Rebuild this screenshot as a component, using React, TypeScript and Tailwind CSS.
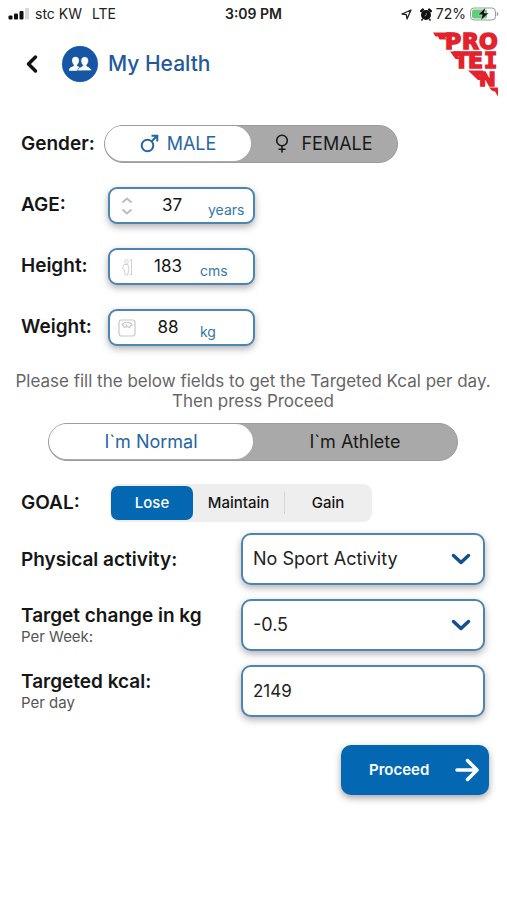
import React, { useState } from "react";

const fieldBox =
  "border-2 border-[#4a86b0] bg-white shadow-[0_3px_7px_rgba(60,50,60,0.38)]";

function StatusBar() {
  return (
    <div className="grid h-7 grid-cols-[1fr_auto_1fr] items-center pr-2 pl-2 text-[#222]">
      <div className="flex items-center">
        <svg width="21" height="12" viewBox="0 0 21 12" className="mr-1.5" aria-hidden="true">
          <rect x="0.5" y="7.5" width="4" height="4" rx="1" fill="#111" />
          <rect x="6" y="5.5" width="4" height="6" rx="1" fill="#111" />
          <rect x="11.500" y="3" width="4" height="8.500" rx="1" fill="#111" />
          <rect x="17" y="0" width="4" height="11.500" rx="1" fill="#d8d8d8" />
        </svg>
        <span className="mr-2.5 text-sm">stc KW</span>
        <span className="text-sm">LTE</span>
      </div>
      <div className="text-sm font-semibold">3:09 PM</div>
      <div className="flex items-center justify-end">
        <svg width="11" height="11" viewBox="0 0 11 11" className="mr-2" aria-hidden="true">
          <path d="M10 1 L1 5 L5.300 5.700 L6 10 Z" fill="none" stroke="#222" strokeWidth="1.300" strokeLinejoin="round" />
        </svg>
        <svg width="12" height="13" viewBox="0 0 12 13" className="mr-1" aria-hidden="true">
          <circle cx="6" cy="7" r="5" fill="#111" />
          <path d="M1.200 3.200 L2.800 1.600 M10.800 3.200 L9.200 1.600" stroke="#111" strokeWidth="2.400" strokeLinecap="round" />
          <path d="M2.600 11 L1.500 12.500 M9.400 11 L10.500 12.500" stroke="#111" strokeWidth="1.500" />
          <path d="M6.200 4.800 V7.200 L4.600 8" fill="none" stroke="#999" strokeWidth="0.800" />
        </svg>
        <span className="mr-1 text-sm">72%</span>
        <svg width="29" height="14" viewBox="0 0 29 14" aria-hidden="true">
          <rect x="0.500" y="1" width="25" height="12" rx="3.500" fill="#fff" stroke="#9a9a9a" />
          <rect x="2" y="2.500" width="15" height="9" rx="2" fill="#5fd07a" />
          <path d="M26.800 5 C28.800 5.500 28.800 8.500 26.800 9 Z" fill="#999" />
          <path d="M15.500 0.500 L8 7.800 H12.300 L10.700 13.500 L18.800 6 H14.200 Z" fill="#111" stroke="#fff" strokeWidth="0.400" />
        </svg>
      </div>
    </div>
  );
}

function PeopleIcon() {
  return (
    <svg width="36" height="36" viewBox="0 0 36 36" aria-hidden="true">
      <circle cx="18" cy="18" r="18" fill="#1557a5" />
      <g fill="#fff">
        <path d="M7 24.800 C7 22 8.500 21.400 11.300 20.300 C12 20 12.100 19.200 11.600 18.600 C10.500 17.300 10 15.800 10 14.300 C10 11.900 11.500 10.700 13.500 10.700 C15.500 10.700 17 11.900 17 14.300 C17 15.900 16.500 17.400 15.400 18.600 C14.900 19.200 15 20 15.700 20.300 C18 21.200 19.500 22 19.500 24.800 Z" />
        <path d="M15.500 24.800 C16 22.200 17.300 21.500 20 20.400 C20.800 20.100 20.800 19.200 20.300 18.600 C19.200 17.400 18.900 15.900 18.900 14.500 C18.900 12 20.400 10.700 22.700 10.700 C25 10.700 26.500 12 26.500 14.500 C26.500 16 26.100 17.400 25 18.600 C24.500 19.200 24.500 20.100 25.300 20.400 C28 21.500 29.200 22.200 29.500 24.800 Z" stroke="#1557a5" strokeWidth="0.700" />
      </g>
    </svg>
  );
}

function BrandLogo() {
  return (
    <svg
      width="66"
      height="66"
      viewBox="0 0 66 66"
      className="absolute top-[31px] right-2 overflow-visible"
      role="img"
      aria-label="Protein"
    >
      <g fill="#e3222c">
        <path d="M0 1.500 H18 V6 H12 L13.500 8.500 H6.500 L5 5.500 H2.500 Z" />
        <path d="M17 20.500 H28 V25 H25 L26.500 28 H22.500 Z" />
        <path d="M35 39.500 H50 V44 H46.500 L50 49 H45 Z" />
        <path d="M56 56.500 H65 V65.500 L62 60.500 L59.500 60 Z" />
      </g>
      {/* one word, stepped over three rows */}
      <text
        x="12 29 46 21 35 51 46"
        y="18 18 18 37 37 37 55"
        fill="#e3222c"
        stroke="#e3222c"
        strokeWidth="1.500"
        fontSize="22"
        fontWeight="700"
        className="font-['DejaVu_Sans']"
      >
        PROTE<tspan className="font-['DejaVu_Sans_Mono']">I</tspan>
        <tspan fontSize="20">N</tspan>
      </text>
    </svg>
  );
}

function MaleIcon() {
  return (
    <svg width="19" height="19" viewBox="0 0 19 19" fill="none" stroke="currentColor" strokeWidth="2" aria-hidden="true">
      <circle cx="7.500" cy="11.500" r="5.800" />
      <path d="M11.700 7.300 L17 2 M11.500 1.700 H17.300 V7.500" />
    </svg>
  );
}

function FemaleIcon() {
  return (
    <svg width="14" height="19" viewBox="0 0 14 19" fill="none" stroke="currentColor" strokeWidth="1.600" aria-hidden="true">
      <circle cx="7" cy="6.500" r="5.300" />
      <path d="M7 11.800 V18.500 M3.500 15.300 H10.500" />
    </svg>
  );
}

function AgeIcon() {
  return (
    <svg width="14" height="20" viewBox="0 0 14 20" fill="none" stroke="#bdbdbd" strokeWidth="2" aria-hidden="true">
      <path d="M2.500 6.500 L7 2.500 L11.500 6.500 M2.500 13.500 L7 17.500 L11.500 13.500" />
    </svg>
  );
}

function HeightIcon() {
  return (
    <svg width="14" height="18" viewBox="0 0 14 18" fill="none" stroke="#d2d2d2" aria-hidden="true">
      <circle cx="6.500" cy="3.500" r="1.800" />
      <path d="M4 6.500 H8 L9 11 L7.500 17 H5 L4.500 12 L2.500 10.500 Z M11.500 1 V17 M9.500 2 H11.500 M9.500 16.500 H11.500" />
    </svg>
  );
}

function WeightIcon() {
  return (
    <svg width="18" height="18" viewBox="0 0 18 18" fill="none" stroke="#c8c8c8" strokeWidth="1.200" className="flex-none" aria-hidden="true">
      <rect x="1" y="1" width="16" height="16" rx="2.500" />
      <path d="M4 5.500 C6.500 2.500 11.500 2.500 14 5.500 L11.500 8.500 C10 7.500 8 7.500 6.500 8.500 Z M9 7.500 L8 5" />
    </svg>
  );
}

interface NumberFieldProps {
  id: string;
  label: string;
  unit: string;
  initial: string;
  icon: React.ReactNode;
  unitClass: string;
}

function NumberField({ id, label, unit, initial, icon, unitClass }: NumberFieldProps) {
  const [value, setValue] = useState(initial);

  return (
    <div className="flex items-center">
      <label htmlFor={id} className="w-[87px] text-[19px] font-semibold">
        {label}
      </label>
      <div className={`flex h-[37px] w-[147px] items-center rounded-[9px] pr-2 pl-2 ${fieldBox}`}>
        <span className="flex w-[18px] flex-none justify-center">{icon}</span>
        <input
          id={id}
          inputMode="numeric"
          value={value}
          onChange={(e) => setValue(e.target.value)}
          className="w-0 min-w-0 flex-1 bg-transparent text-center text-[17px] outline-none"
        />
        <span className={`flex-none pt-2 text-sm text-[#3478a8] ${unitClass}`}>{unit}</span>
      </div>
    </div>
  );
}

interface PillOption {
  value: string;
  content: React.ReactNode;
}

interface PillToggleProps {
  name: string;
  label: string;
  options: PillOption[];
  className: string;
}

function PillToggle({ name, label, options, className }: PillToggleProps) {
  const [selected, setSelected] = useState(options[0].value);

  return (
    <div
      role="radiogroup"
      aria-label={label}
      className={`flex h-[38px] rounded-full border border-[#9c9c9c] bg-[#a9a9a9] pb-px ${className}`}
    >
      {options.map((option) => (
        <label
          key={option.value}
          className={`relative flex flex-1 cursor-pointer items-center justify-center rounded-full text-lg ${
            selected === option.value ? "bg-white text-[#2765a3]" : "text-[#1a1a1a]"
          }`}
        >
          <input
            type="radio"
            name={name}
            value={option.value}
            checked={selected === option.value}
            onChange={() => setSelected(option.value)}
            className="sr-only"
          />
          {option.content}
        </label>
      ))}
    </div>
  );
}

const goals = ["Lose", "Maintain", "Gain"];

function GoalControl() {
  const [goal, setGoal] = useState("Lose");

  return (
    <div
      role="radiogroup"
      aria-label="Goal"
      className="grid h-[38px] w-[262px] grid-cols-[82px_92px_1fr] items-center rounded-[9px] bg-[#eeeeee] p-px"
    >
      {goals.map((item, i) => (
        <label
          key={item}
          className={`relative flex cursor-pointer items-center justify-center text-[15px] font-medium ${
            goal === item
              ? "h-[34px] rounded-[7px] bg-[#0367b1] text-white"
              : i === 1
                ? "h-[22px] border-r border-[#d4d4d4]"
                : "h-[22px]"
          }`}
        >
          <input
            type="radio"
            name="goal"
            value={item}
            checked={goal === item}
            onChange={() => setGoal(item)}
            className="sr-only"
          />
          {item}
        </label>
      ))}
    </div>
  );
}

interface SelectFieldProps {
  id: string;
  options: string[];
}

function SelectField({ id, options }: SelectFieldProps) {
  return (
    <div className="relative">
      <select
        id={id}
        className={`h-[52px] w-full appearance-none rounded-[10px] pr-12 pl-2.5 text-lg text-[#222] outline-none ${fieldBox}`}
      >
        {options.map((option) => (
          <option key={option}>{option}</option>
        ))}
      </select>
      <svg
        width="20"
        height="12"
        viewBox="0 0 20 12"
        fill="none"
        stroke="#14508f"
        strokeWidth="3.500"
        strokeLinecap="round"
        strokeLinejoin="round"
        className="pointer-events-none absolute top-5 right-3.5"
        aria-hidden="true"
      >
        <path d="M2.500 2.500 L10 9.500 L17.500 2.500" />
      </svg>
    </div>
  );
}

interface PlanRowProps {
  id: string;
  title: string;
  hint?: string;
  children: React.ReactNode;
}

function PlanRow({ id, title, hint, children }: PlanRowProps) {
  return (
    <div className="grid grid-cols-[220px_1fr] items-center">
      <label htmlFor={id} className="pt-0.5">
        <span className="block text-[19px] leading-[22px] font-semibold">{title}</span>
        {hint && <span className="block text-[15px] leading-5 text-[#555]">{hint}</span>}
      </label>
      {children}
    </div>
  );
}

export default function App() {
  return (
    <div className="relative min-h-screen bg-white font-['Inter','Liberation_Sans',sans-serif] text-[#161616]">
      <StatusBar />
      <BrandLogo />

      <header className="flex h-[72px] items-center pl-[26px]">
        <button type="button" aria-label="Back" className="mr-6 cursor-pointer">
          <svg width="12" height="20" viewBox="0 0 12 20" fill="none" stroke="#111" strokeWidth="3.500" strokeLinecap="round" strokeLinejoin="round">
            <path d="M9.500 3 L2.500 10 L9.500 17" />
          </svg>
        </button>
        <PeopleIcon />
        <h1 className="ml-2.5 text-[21px] font-medium text-[#1f5a9b]">My Health</h1>
      </header>

      <form className="pt-[25px] pr-[22px] pl-[21px]" onSubmit={(e) => e.preventDefault()}>
        <div className="flex items-center">
          <span className="w-[83px] flex-none text-[19px] font-semibold">Gender:</span>
          <PillToggle
            name="gender"
            label="Gender"
            className="w-[294px]"
            options={[
              {
                value: "male",
                content: (
                  <span className="flex items-center gap-2">
                    <MaleIcon /> MALE
                  </span>
                ),
              },
              {
                value: "female",
                content: (
                  <span className="flex items-center gap-3">
                    <FemaleIcon /> FEMALE
                  </span>
                ),
              },
            ]}
          />
        </div>

        <div className="mt-6 flex flex-col gap-6">
          <NumberField id="age" label="AGE:" unit="years" initial="37" icon={<AgeIcon />} unitClass="w-[37px]" />
          <NumberField id="height" label="Height:" unit="cms" initial="183" icon={<HeightIcon />} unitClass="w-[45px]" />
          <NumberField id="weight" label="Weight:" unit="kg" initial="88" icon={<WeightIcon />} unitClass="w-[45px]" />
        </div>

        <p className="-mx-3 mt-[25px] text-center text-[17px] leading-5 text-[#666]">
          Please fill the below fields to get the Targeted Kcal per day.
          <br />
          Then press Proceed
        </p>

        <PillToggle
          name="level"
          label="Activity level"
          className="mx-auto mt-3 w-[410px] max-w-full"
          options={[
            { value: "normal", content: "I`m Normal" },
            { value: "athlete", content: "I`m Athlete" },
          ]}
        />

        <div className="mt-[23px] flex items-center">
          <span className="w-[89px] flex-none text-[19px] font-semibold">GOAL:</span>
          <GoalControl />
        </div>

        <div className="mt-[11px] flex flex-col gap-3.5">
          <PlanRow id="activity" title="Physical activity:">
            <SelectField id="activity" options={["No Sport Activity", "Light Activity", "Heavy Activity"]} />
          </PlanRow>
          <PlanRow id="change" title="Target change in kg" hint="Per Week:">
            <SelectField id="change" options={["-0.5", "-1"]} />
          </PlanRow>
          <PlanRow id="kcal" title="Targeted kcal:" hint="Per day">
            <input
              id="kcal"
              inputMode="numeric"
              defaultValue="2149"
              className={`h-[52px] w-full rounded-[10px] px-2.5 text-[17px] text-[#222] outline-none ${fieldBox}`}
            />
          </PlanRow>
        </div>

        <div className="-mr-1 mt-7 flex justify-end">
          <button
            type="submit"
            className="flex h-[50px] w-[148px] cursor-pointer items-center justify-between rounded-[10px] bg-[#0367b1] pr-2.5 pl-7 text-[15px] font-semibold text-white shadow-[0_3px_7px_rgba(60,50,60,0.45)]"
          >
            Proceed
            <svg width="24" height="24" viewBox="0 0 24 24" fill="none" stroke="currentColor" strokeWidth="3.500" strokeLinecap="round" strokeLinejoin="round" aria-hidden="true">
              <path d="M2 12 H22 M12.500 2.500 L22 12 L12.500 21.500" />
            </svg>
          </button>
        </div>
      </form>
    </div>
  );
}
